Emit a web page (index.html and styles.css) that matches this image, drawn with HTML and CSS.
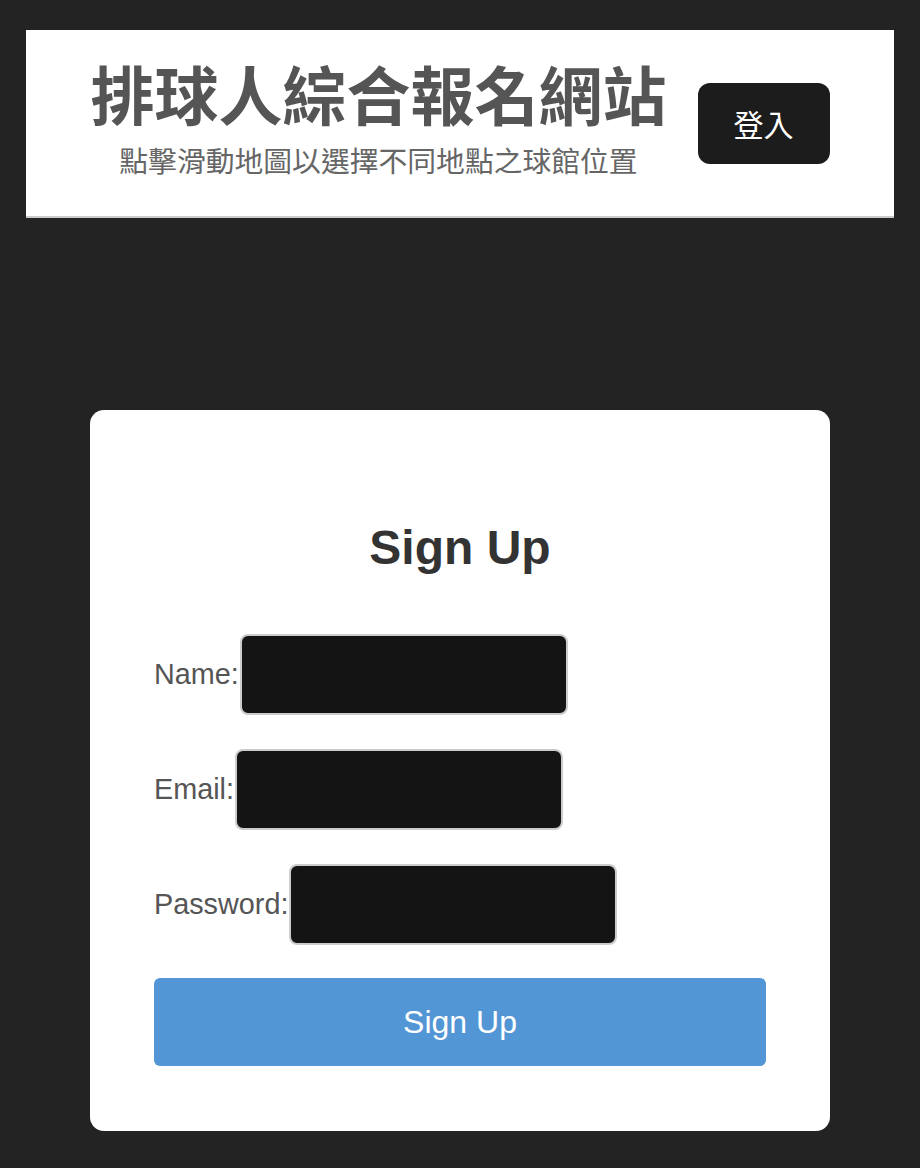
FILE: index.html
```html
<!DOCTYPE html>
<html lang="zh-Hant">
<head>
<meta charset="utf-8">
<title>排球人綜合報名網站</title>
<link rel="stylesheet" href="styles.css">
</head>
<body>
<header class="site-header">
  <div class="brand">
    <h1 class="brand-title">排球人綜合報名網站</h1>
    <p class="brand-sub">點擊滑動地圖以選擇不同地點之球館位置</p>
  </div>
  <button class="login-btn" type="button">登入</button>
</header>
<main class="main">
  <section class="card">
    <h2 class="card-title">Sign Up</h2>
    <form class="form">
      <div class="row">
        <label class="label" for="name">Name:</label>
        <input class="input" id="name" type="text">
      </div>
      <div class="row">
        <label class="label" for="email">Email:</label>
        <input class="input" id="email" type="email">
      </div>
      <div class="row">
        <label class="label" for="password">Password:</label>
        <input class="input" id="password" type="password">
      </div>
      <button class="submit" type="button">Sign Up</button>
    </form>
  </section>
</main>
</body>
</html>
```

FILE: styles.css
```css
* {
  box-sizing: border-box;
}

html, body {
  margin: 0;
  padding: 0;
}

body {
  background: #232323;
  font-family: "Liberation Sans", Arial, "Noto Sans CJK TC", sans-serif;
  padding: 30px 26px 0;
  min-height: 1168px;
}

.site-header {
  background: #ffffff;
  border-bottom: 2px solid #cbcbcb;
  display: flex;
  align-items: center;
  justify-content: center;
  gap: 31px;
  padding: 25px 0;
}

.brand {
  display: flex;
  flex-direction: column;
  align-items: center;
}

.brand-title {
  margin: 0;
  font-family: "Noto Sans CJK TC", sans-serif;
  font-size: 64px;
  font-weight: 700;
  line-height: 74px;
  color: #555555;
}

.brand-sub {
  margin: 0;
  font-family: "Noto Sans CJK TC", sans-serif;
  font-size: 28.8px;
  font-weight: 400;
  line-height: 62px;
  color: #666666;
}

.login-btn {
  height: 81px;
  width: 132px;
  border: none;
  border-radius: 12px;
  background: #1c1c1c;
  color: #ffffff;
  font-family: "Noto Sans CJK TC", sans-serif;
  font-size: 30px;
  padding: 0;
  display: flex;
  align-items: center;
  justify-content: center;
}

.main {
  display: flex;
  justify-content: center;
  padding-top: 192px;
}

.card {
  width: 740px;
  background: #ffffff;
  border-radius: 14px;
  padding: 64px 64px 65px;
}

.card-title {
  margin: 46px 0 58px;
  text-align: center;
  font-size: 48px;
  line-height: 56px;
  font-weight: 700;
  color: #333333;
}

.form {
  display: flex;
  flex-direction: column;
  align-items: flex-start;
  gap: 34px;
}

.row {
  display: flex;
  align-items: center;
}

.label {
  font-size: 28.8px;
  color: #555555;
}

.input {
  width: 328px;
  height: 81px;
  margin-left: 1px;
  background: #141414;
  border: 2px solid #cccccc;
  border-radius: 8px;
  color: #ffffff;
  font-size: 28px;
  padding: 0 12px;
}

.submit {
  align-self: stretch;
  height: 88px;
  margin-top: -1px;
  border: none;
  border-radius: 6px;
  background: #5296d5;
  color: #ffffff;
  font-family: "Liberation Sans", Arial, sans-serif;
  font-size: 32px;
}
```
